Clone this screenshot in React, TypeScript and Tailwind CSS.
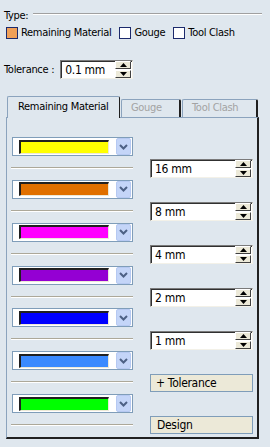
import React from 'react';

const colors = ['#ffff00', '#e07000', '#ff00ff', '#9400d3', '#0000ff', '#3a8aff', '#00ff00'];
const values = ['16 mm', '8 mm', '4 mm', '2 mm', '1 mm'];

// small up/down spin buttons, classic look
const Spinner = () => (
  <div className="flex flex-col w-[16px] h-[17px] gap-[1px]">
    <div className="flex-1 flex items-center justify-center bg-[#ece9d8] border border-t-white border-l-white border-r-[#404040] border-b-[#404040]">
      <svg width="7" height="4" viewBox="0 0 7 4"><path d="M3.5 0 L7 4 L0 4 Z" fill="#000" /></svg>
    </div>
    <div className="flex-1 flex items-center justify-center bg-[#ece9d8] border border-t-white border-l-white border-r-[#404040] border-b-[#404040]">
      <svg width="7" height="4" viewBox="0 0 7 4"><path d="M0 0 L7 0 L3.5 4 Z" fill="#000" /></svg>
    </div>
  </div>
);

const SpinBox = ({ value, width }: { value: string; width: string }) => (
  <div
    className={`${width} h-[19px] flex items-center bg-white border border-t-[#7a7a7a] border-l-[#7a7a7a] border-r-[#f3f1e8] border-b-[#f3f1e8] shadow-[inset_1px_1px_0_#303030]`}
  >
    <span className="flex-1 pl-[4px] text-[12px] text-black leading-none">{value}</span>
    <div className="pr-[1px]">
      <Spinner />
    </div>
  </div>
);

const ColorCombo = ({ color }: { color: string }) => (
  <div className="w-[121px] h-[19px] flex items-center bg-white border border-[#7f9db9] pl-[6px] pr-[1px]">
    <div
      className="w-[90px] h-[14px] border-t-2 border-l-2 border-t-[#202020] border-l-[#202020] border-b border-r border-b-[#ece9d8] border-r-[#ece9d8]"
      style={{ backgroundColor: color }}
    />
    <div className="ml-auto w-[15px] h-[17px] rounded-[2px] bg-[#c4d5f8] border border-[#b6c9f2] flex items-center justify-center">
      <svg width="9" height="6" viewBox="0 0 9 6">
        <path d="M1 1 L4.5 4.5 L8 1" stroke="#4d6185" strokeWidth="2" fill="none" />
      </svg>
    </div>
  </div>
);

const Separator = () => <div className="w-[122px] border-t border-t-[#aca899] border-b border-b-white" />;

const Check = ({ checked, label }: { checked?: boolean; label: string }) => (
  <div className="flex items-center gap-[3px]">
    <div className={`w-[12px] h-[12px] border border-[#1c2a6c] ${checked ? 'bg-[#f0a058]' : 'bg-white'}`} />
    <span>{label}</span>
  </div>
);

const App = () => {
  return (
    <div
      className="w-[270px] h-[447px] bg-[#dfe7ee] text-[11px] tracking-[-0.3px] text-black overflow-hidden whitespace-nowrap"
      style={{ fontFamily: '"DejaVu Sans Condensed", "Liberation Sans", Arial, sans-serif' }}
    >
      {/* Type header */}
      <div className="flex items-center pl-[4px] pr-[8px] pt-[9px] h-[21px]">
        <span className="leading-none">Type:</span>
        <div className="flex-1 ml-[5px] -mt-[2px] border-t border-t-[#a0a0a0] border-b border-b-white" />
      </div>

      {/* check boxes */}
      <div className="flex items-center pl-[6px] mt-[5px] h-[13px] leading-none">
        <Check checked label="Remaining Material" />
        <div className="ml-[8px]">
          <Check label="Gouge" />
        </div>
        <div className="ml-[8px]">
          <Check label="Tool Clash" />
        </div>
      </div>

      {/* tolerance */}
      <div className="flex items-center pl-[4px] mt-[21px] gap-[6px]">
        <span className="leading-none">Tolerance :</span>
        <SpinBox value="0.1 mm" width="w-[73px]" />
      </div>

      {/* tabs */}
      <div className="flex items-end pl-[7px] mt-[17px] h-[21px]">
        <div className="w-[113px] h-[22px] -mb-[1px] relative z-10 bg-[#dfe7ee] border-t border-l border-[#8ba3bd] border-r border-r-[#202020] rounded-t-[2px] flex items-center pl-[10px]">
          Remaining Material
        </div>
        <div className="ml-[1px] w-[60px] h-[18px] border-t border-l border-[#8ba3bd] border-r-2 border-r-[#202020] rounded-t-[2px] flex items-center pl-[9px] text-[#a3a3a3]">
          Gouge
        </div>
        <div className="ml-[1px] w-[76px] h-[18px] border-t border-l border-[#8ba3bd] border-r-2 border-r-[#202020] rounded-t-[2px] flex items-center pl-[9px] text-[#a3a3a3]">
          Tool Clash
        </div>
      </div>

      {/* panel */}
      <div className="ml-[6px] w-[253px] h-[322px] border-t border-l border-[#8ba3bd] border-r-2 border-b-2 border-r-[#202020] border-b-[#202020] flex gap-[17px] pl-[5px] pt-[19px]">
        <div className="flex flex-col">
          {colors.map((c) => (
            <div key={c} className="flex flex-col h-[43px]">
              <ColorCombo color={c} />
              <div className="mt-[11px] -ml-[1px]">
                <Separator />
              </div>
            </div>
          ))}
        </div>
        <div className="flex flex-col pt-[22px]">
          {values.map((v) => (
            <div key={v} className="h-[43px]">
              <SpinBox value={v} width="w-[103px]" />
            </div>
          ))}
          <div className="h-[42px]">
            <div className="w-[103px] h-[18px] bg-[#ece9d8] border border-[#7f9db9] flex items-center pl-[5px] leading-none text-[12px]">
              + Tolerance
            </div>
          </div>
          <div className="w-[103px] h-[18px] bg-[#ece9d8] border border-[#7f9db9] flex items-center pl-[6px] leading-none text-[12px]">
            Design
          </div>
        </div>
      </div>
    </div>
  );
};

export default App;
